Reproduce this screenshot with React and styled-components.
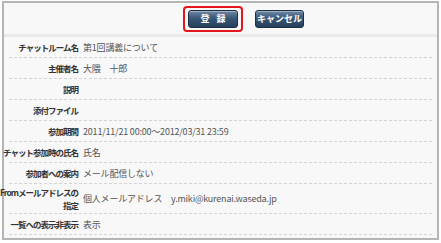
import React from 'react'
import styled, { createGlobalStyle } from 'styled-components'

const GlobalStyle = createGlobalStyle`
  body {
    margin: 0;
    background: #fff;
    font-family: "Noto Sans CJK JP", "Liberation Sans", sans-serif;
  }
`

const Frame = styled.div`
  margin: 1px 0 0 2px;
  width: 433px;
  border: 2px solid #b5b5b5;
  background: #f8f8f8;
`

const Header = styled.div`
  height: 31px;
  display: flex;
  align-items: center;
  padding-left: 179px;
  border-bottom: 3px solid #e9e9e9;
`

const Highlight = styled.div`
  display: flex;
  padding: 2px 3px;
  border: 2px solid #e3161b;
  border-radius: 4px;
`

const Button = styled.button`
  width: ${p => p.$w}px;
  height: 18px;
  padding: 0;
  margin-left: ${p => p.$ml || 0}px;
  border: 1px solid #1d2f45;
  border-radius: 3px;
  background: linear-gradient(#6f88a5, #3b5776 45%, #263f5b);
  box-shadow: inset 0 1px 0 rgba(255, 255, 255, 0.35);
  color: #fff;
  font-family: "Noto Sans CJK JP", sans-serif;
  font-size: 9px;
  font-weight: bold;
  letter-spacing: ${p => p.$ls || 0}px;
  text-indent: ${p => p.$ls || 0}px;
  line-height: 16px;
`

const Table = styled.div`
  padding: 0 5px 3px 5px;
`

const Row = styled.div`
  display: grid;
  grid-template-columns: 69px 1fr;
  column-gap: 5px;
  align-items: center;
  height: ${p => p.$h || 20}px;
  border-bottom: 1px dashed #d4d4d4;
`

const Label = styled.div`
  justify-self: end;
  text-align: right;
  font-size: 8.5px;
  font-weight: bold;
  color: #333;
  line-height: 13px;
  letter-spacing: -1px;
  white-space: pre;
`

const Value = styled.div`
  font-size: 9px;
  color: #555;
  letter-spacing: -0.2px;
  white-space: nowrap;
`

const rows = [
  ['チャットルーム名', '第1回講義について'],
  ['主催者名', '大隈　十郎'],
  ['説明', ''],
  ['添付ファイル', ''],
  ['参加期間', '2011/11/21 00:00～2012/03/31 23:59'],
  ['チャット参加時の氏名', '氏名'],
  ['参加者への案内', 'メール配信しない'],
  ['Fromメールアドレスの\n指定', '個人メールアドレス　y.miki@kurenai.waseda.jp', 29],
  ['一覧への表示非表示', '表示'],
]

const App = () => (
  <>
    <GlobalStyle />
    <Frame>
      <Header>
        <Highlight>
          <Button $w={50} $ls={7}>登録</Button>
        </Highlight>
        <Button $w={49} $ml={12}>キャンセル</Button>
      </Header>
      <Table>
        {rows.map(([label, value, h]) => (
          <Row key={label} $h={h}>
            <Label>{label}</Label>
            <Value>{value}</Value>
          </Row>
        ))}
      </Table>
    </Frame>
  </>
)

export default App
